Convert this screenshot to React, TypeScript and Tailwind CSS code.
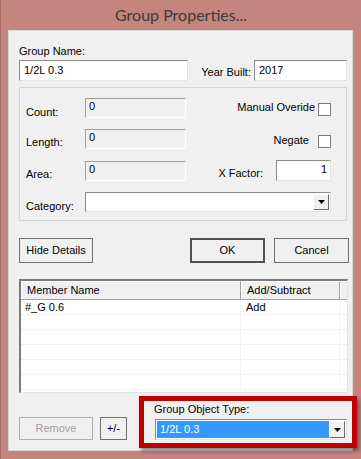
import React from 'react';

const sunken = 'border border-t-[#8a8a8a] border-l-[#8a8a8a] border-r-[#e3e3e3] border-b-[#e3e3e3]';

const DropArrow: React.FC = () => (
  <div className="w-[16px] h-full bg-[#f0f0f0] border border-t-white border-l-white border-r-[#696969] border-b-[#696969] flex items-center justify-center">
    <svg width="7" height="4" viewBox="0 0 7 4">
      <path d="M0 0h7L3.5 4z" fill="#000" />
    </svg>
  </div>
);

const Checkbox: React.FC = () => (
  <div className="w-[13px] h-[13px] bg-white border border-[#7a7a7a]" />
);

const ReadOnlyField: React.FC<{ value: string }> = ({ value }) => (
  <div className="w-[101px] h-[20px] bg-[#f0f0f0] border border-t-[#a0a0a0] border-l-[#a0a0a0] border-r-[#ffffff] border-b-[#ffffff] pl-[3px] pt-[1px] leading-[13px]">
    {value}
  </div>
);

const Button: React.FC<{ label: string; width: string; isDefault?: boolean; disabled?: boolean }> = ({
  label,
  width,
  isDefault = false,
  disabled = false
}) => (
  <div
    className={`${width} h-full flex items-center justify-center bg-[#f0f0f0] ${
      isDefault ? 'border-2 border-[#505050]' : disabled ? 'border border-[#adadad]' : 'border border-[#6f6f6f]'
    } ${disabled ? 'text-[#a0a0a0]' : 'text-black'}`}
  >
    {label}
  </div>
);

const rows = [
  { name: '#_G 0.6', op: 'Add' },
  { name: '', op: '' },
  { name: '', op: '' },
  { name: '', op: '' },
  { name: '', op: '' },
  { name: '', op: '' }
];

export default function App() {
  return (
    <div
      className="w-[361px] h-[459px] bg-[#c4857f] border-l border-[#a36a66] overflow-hidden text-[11px] text-black"
      style={{ fontFamily: '"Liberation Sans", Arial, sans-serif' }}
    >
      {/* title bar */}
      <div className="h-[30px] flex items-center justify-center pb-[1px]">
        <span
          className="text-[16px] text-[#3a3a3a]"
          style={{ fontFamily: 'Lato, "Noto Sans", sans-serif' }}
        >
          Group Properties...
        </span>
      </div>

      <div className="ml-[7px] w-[345px] h-[421px] bg-[#f0f0f0] border border-[#d6d6d6] pl-[10px] pr-[5px] flex flex-col">
        <div className="mt-[14px] leading-[13px]">Group Name:</div>

        <div className="mt-[2px] flex items-start h-[21px]">
          <div className={`w-[169px] h-[21px] bg-white ${sunken} pl-[4px] leading-[19px]`}>1/2L 0.3</div>
          <div className="w-[63px] text-right mt-[6px] leading-[13px]">Year Built:</div>
          <div className={`ml-[3px] w-[93px] h-[21px] bg-white ${sunken} pl-[4px] leading-[19px]`}>2017</div>
        </div>

        {/* details group box */}
        <div className="mt-[6px] w-[328px] h-[134px] border border-[#d5d5d5] pr-[15px]">
          <div className="mt-[10px] flex items-start h-[20px]">
            <div className="w-[65px] pl-[6px] mt-[8px] leading-[13px]">Count:</div>
            <ReadOnlyField value="0" />
            <div className="flex-1" />
            <div className="mt-[3px] leading-[13px]">Manual Overide</div>
            <div className="ml-[3px] mt-[5px]">
              <Checkbox />
            </div>
          </div>

          <div className="mt-[11px] flex items-start h-[20px]">
            <div className="w-[65px] pl-[6px] mt-[7px] leading-[13px]">Length:</div>
            <ReadOnlyField value="0" />
            <div className="flex-1" />
            <div className="mt-[5px] leading-[13px]">Negate</div>
            <div className="ml-[9px] mt-[6px]">
              <Checkbox />
            </div>
          </div>

          <div className="mt-[11px] flex items-start h-[21px]">
            <div className="w-[65px] pl-[6px] mt-[8px] leading-[13px]">Area:</div>
            <div className="mt-[1px]">
              <ReadOnlyField value="0" />
            </div>
            <div className="flex-1" />
            <div className="mt-[7px] leading-[13px]">X Factor:</div>
            <div className={`ml-[13px] w-[55px] h-[21px] bg-white ${sunken} pr-[3px] text-right leading-[17px]`}>1</div>
          </div>

          <div className="mt-[11px] flex items-start h-[20px]">
            <div className="w-[65px] pl-[6px] mt-[8px] leading-[13px]">Category:</div>
            <div className={`flex-1 h-[20px] bg-white ${sunken} flex justify-end p-[1px]`}>
              <DropArrow />
            </div>
          </div>
        </div>

        {/* buttons */}
        <div className="mt-[17px] h-[25px] flex -mr-[2px]">
          <Button label="Hide Details" width="w-[74px]" />
          <div className="flex-1" />
          <Button label="OK" width="w-[75px]" isDefault />
          <div className="w-[9px]" />
          <Button label="Cancel" width="w-[75px]" />
        </div>

        {/* member list */}
        <div className="mt-[16px] -mr-[1px] h-[114px] bg-white border-t-2 border-l-2 border-t-[#7a7a7a] border-l-[#7a7a7a] border-r border-b border-r-[#e3e3e3] border-b-[#e3e3e3] overflow-hidden">
          <div className="flex h-[19px] bg-[#f0f0f0]">
            <div className="w-[220px] border-t border-l border-t-white border-l-white border-r border-b border-r-[#a0a0a0] border-b-[#a0a0a0] pl-[5px] leading-[17px]">
              Member Name
            </div>
            <div className="w-[99px] border-t border-l border-t-white border-l-white border-r border-b border-r-[#a0a0a0] border-b-[#a0a0a0] pl-[5px] leading-[17px]">
              Add/Subtract
            </div>
            <div className="flex-1 border-t border-l border-t-white border-l-white border-b border-b-[#a0a0a0]" />
          </div>
          {rows.map((row, i) => (
            <div key={i} className="flex h-[15px] border-b border-[#f0f0f0]">
              <div className="w-[220px] border-r border-[#f0f0f0] pl-[4px] leading-[14px]">{row.name}</div>
              <div className="w-[99px] border-r border-[#f0f0f0] pl-[5px] leading-[14px]">{row.op}</div>
            </div>
          ))}
        </div>

        {/* bottom row */}
        <div className="mt-[3px] flex items-start">
          <div className="mt-[21px] h-[23px] flex">
            <Button label="Remove" width="w-[74px]" disabled />
            <div className="w-[7px]" />
            <Button label="+/-" width="w-[27px]" />
          </div>
          <div className="ml-[12px] -mr-[10px] w-[218px] h-[52px] border-[5px] border-[#c00000] bg-[#f0f0f0] shadow-[2px_3px_4px_rgba(0,0,0,0.45)] relative z-10 pl-[10px]">
            <div className="mt-[2px] leading-[13px]">Group Object Type:</div>
            <div className={`mt-[3px] ml-[1px] w-[192px] h-[21px] bg-white ${sunken} flex p-[1px]`}>
              <div className="flex-1 bg-[#3399ff] text-white pl-[3px] leading-[17px]">1/2L 0.3</div>
              <DropArrow />
            </div>
          </div>
        </div>
      </div>
    </div>
  );
}
